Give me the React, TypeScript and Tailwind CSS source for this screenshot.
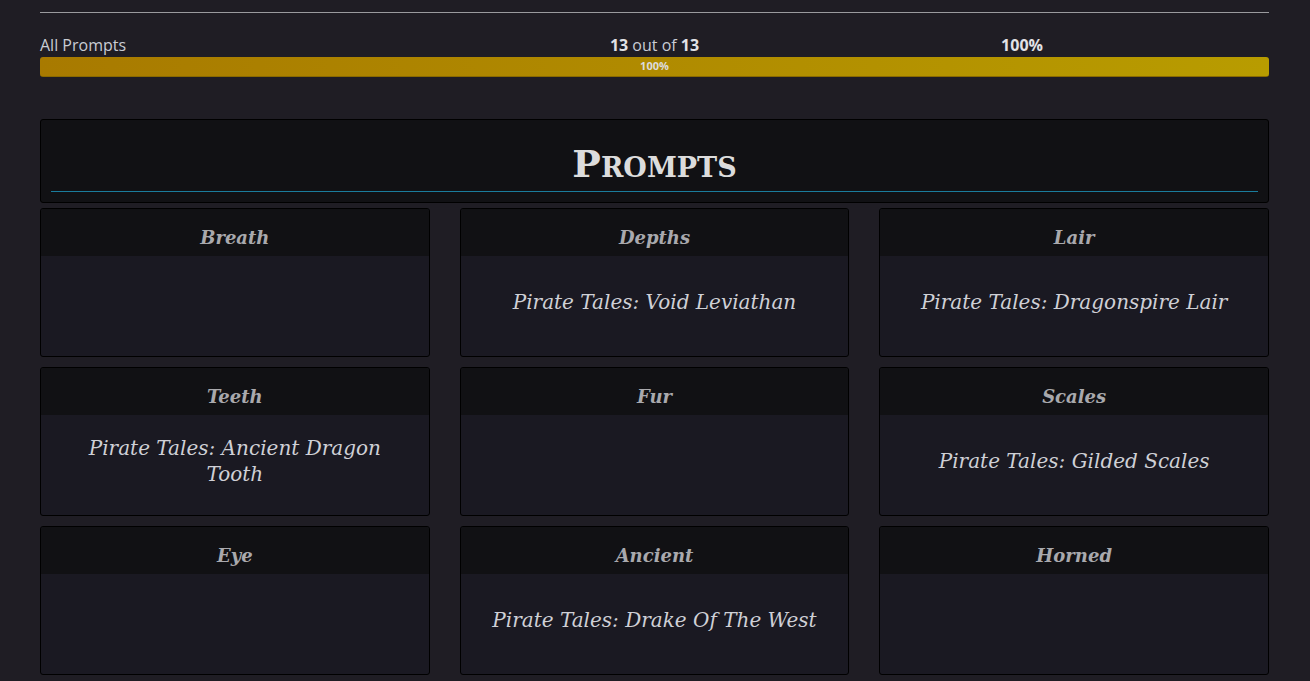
const prompts = [
  { title: 'Breath', entry: '' },
  { title: 'Depths', entry: 'Pirate Tales: Void Leviathan' },
  { title: 'Lair', entry: 'Pirate Tales: Dragonspire Lair' },
  { title: 'Teeth', entry: 'Pirate Tales: Ancient Dragon Tooth' },
  { title: 'Fur', entry: '' },
  { title: 'Scales', entry: 'Pirate Tales: Gilded Scales' },
  { title: 'Eye', entry: '' },
  { title: 'Ancient', entry: 'Pirate Tales: Drake Of The West' },
  { title: 'Horned', entry: '' },
];

const serif = "font-['DejaVu_Serif','Liberation_Serif',serif]";

export default function App() {
  return (
    <div className="min-h-screen bg-[#1f1d24] font-['Open_Sans',sans-serif]">
      <div className="pl-10 pr-[41px] pt-3 pb-6">
        <hr className="border-0 h-px bg-[#9a9a9e]" />

        <div className="mt-[22px] grid grid-cols-[1fr_auto_1fr] text-[16px] leading-[21px] text-[#c9ccd4]">
          <div>All Prompts</div>
          <div className="text-center">
            <b className="text-[#e2e2e6]">13</b> out of <b className="text-[#e2e2e6]">13</b>
          </div>
          <div className="flex">
            <span className="ml-[302px] font-bold text-[#e2e2e6]">100%</span>
          </div>
        </div>

        <div className="mt-px h-5 rounded-[3px] bg-gradient-to-r from-[#a87a00] to-[#b89c00] border-b border-[#8a6a00] flex items-center justify-center">
          <span className="text-[11px] font-bold text-[#dcdcdc]">100%</span>
        </div>

        <div className="mt-[42px] rounded-[3px] border border-black bg-[#111114] px-2.5 pt-[22px] pb-2.5">
          <h1 className={`${serif} text-center text-[38px] leading-[44px] font-bold text-[#dcdcdc] [font-variant:small-caps]`}>
            Prompts
          </h1>
          <div className="mt-[5px] h-px bg-[#1a7c9c]" />
        </div>

        <div className="mt-[5px] grid grid-cols-3 gap-x-[30px] gap-y-[10px]">
          {prompts.map((p) => (
            <div key={p.title} className="h-[149px] rounded-[3px] border border-black bg-[#1a1922] flex flex-col overflow-hidden">
              <div className={`${serif} h-[47px] shrink-0 bg-[#111114] flex items-center justify-center pt-[10px] italic font-bold text-[18px] text-[#a9a9ad]`}>
                {p.title}
              </div>
              <div className={`${serif} flex-1 flex items-center justify-center px-7 pb-2 text-center italic text-[20px] leading-[26px] text-[#cfd0d6]`}>
                {p.entry}
              </div>
            </div>
          ))}
        </div>
      </div>
    </div>
  );
}
